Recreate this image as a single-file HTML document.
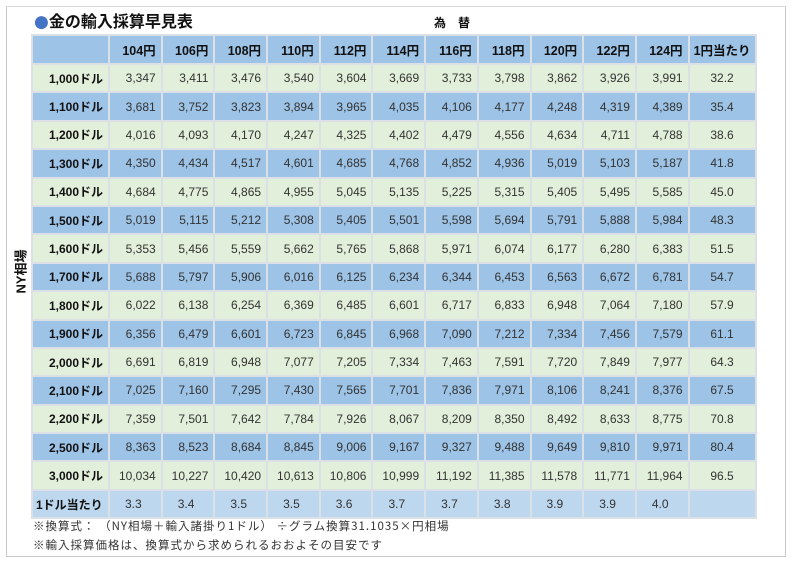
<!DOCTYPE html>
<html><head><meta charset="utf-8"><style>
*{margin:0;padding:0;box-sizing:border-box}
body{width:792px;height:564px;background:#fff;position:relative;overflow:hidden;font-family:"Liberation Sans","Noto Sans CJK JP",sans-serif}
.frame{position:absolute;left:6px;top:6px;width:780px;height:551px;border:1px solid #c8c8c8;border-top-color:#d8d8d8}
.title{position:absolute;left:34px;top:9px;font-size:16px;font-weight:bold;color:#111;line-height:22px;font-family:"Noto Sans CJK JP",sans-serif}
.title span{color:#4472c4;font-family:"DejaVu Sans",sans-serif;font-size:17px}
.fx{position:absolute;left:434px;top:14px;font-size:12px;font-weight:bold;color:#111;letter-spacing:12px}
.ny{position:absolute;left:-4px;top:262px;width:48px;font-size:13px;font-weight:bold;color:#111;transform:rotate(-90deg);text-align:center}
table{position:absolute;left:31px;top:34px;border-collapse:separate;border-spacing:2px;background:#dbe0e7}
td{height:26.4px;font-size:12px;color:#333;text-align:right;padding:0 5px 0 0;white-space:nowrap}
td.h{font-weight:bold;color:#111}
td.last{text-align:center;padding:0}
tr.hd td{background:#9dc3e6;font-weight:bold;color:#111;font-size:12.5px;height:27px}
tr.g td{background:#e2efda}
tr.b td{background:#9dc3e6}
tr.l td{background:#bdd7ee}
tr.l td.n{text-align:left;padding-left:15px}
.note{position:absolute;left:33px;font-size:11.5px;color:#333;font-family:"Noto Sans CJK JP",sans-serif;letter-spacing:1px;line-height:16px}
</style></head><body>
<div class="frame"></div>
<div class="title"><span>●</span>金の輸入採算早見表</div>
<div class="fx">為替</div>
<div class="ny">NY相場</div>
<table>
<colgroup><col style="width:75px"><col span="11" style="width:50.7px"><col style="width:65px"></colgroup>
<tr class="hd"><td></td><td>104円</td><td>106円</td><td>108円</td><td>110円</td><td>112円</td><td>114円</td><td>116円</td><td>118円</td><td>120円</td><td>122円</td><td>124円</td><td class="last">1円当たり</td></tr>
<tr class="g"><td class="h">1,000ドル</td><td>3,347</td><td>3,411</td><td>3,476</td><td>3,540</td><td>3,604</td><td>3,669</td><td>3,733</td><td>3,798</td><td>3,862</td><td>3,926</td><td>3,991</td><td class="last">32.2</td></tr>
<tr class="b"><td class="h">1,100ドル</td><td>3,681</td><td>3,752</td><td>3,823</td><td>3,894</td><td>3,965</td><td>4,035</td><td>4,106</td><td>4,177</td><td>4,248</td><td>4,319</td><td>4,389</td><td class="last">35.4</td></tr>
<tr class="g"><td class="h">1,200ドル</td><td>4,016</td><td>4,093</td><td>4,170</td><td>4,247</td><td>4,325</td><td>4,402</td><td>4,479</td><td>4,556</td><td>4,634</td><td>4,711</td><td>4,788</td><td class="last">38.6</td></tr>
<tr class="b"><td class="h">1,300ドル</td><td>4,350</td><td>4,434</td><td>4,517</td><td>4,601</td><td>4,685</td><td>4,768</td><td>4,852</td><td>4,936</td><td>5,019</td><td>5,103</td><td>5,187</td><td class="last">41.8</td></tr>
<tr class="g"><td class="h">1,400ドル</td><td>4,684</td><td>4,775</td><td>4,865</td><td>4,955</td><td>5,045</td><td>5,135</td><td>5,225</td><td>5,315</td><td>5,405</td><td>5,495</td><td>5,585</td><td class="last">45.0</td></tr>
<tr class="b"><td class="h">1,500ドル</td><td>5,019</td><td>5,115</td><td>5,212</td><td>5,308</td><td>5,405</td><td>5,501</td><td>5,598</td><td>5,694</td><td>5,791</td><td>5,888</td><td>5,984</td><td class="last">48.3</td></tr>
<tr class="g"><td class="h">1,600ドル</td><td>5,353</td><td>5,456</td><td>5,559</td><td>5,662</td><td>5,765</td><td>5,868</td><td>5,971</td><td>6,074</td><td>6,177</td><td>6,280</td><td>6,383</td><td class="last">51.5</td></tr>
<tr class="b"><td class="h">1,700ドル</td><td>5,688</td><td>5,797</td><td>5,906</td><td>6,016</td><td>6,125</td><td>6,234</td><td>6,344</td><td>6,453</td><td>6,563</td><td>6,672</td><td>6,781</td><td class="last">54.7</td></tr>
<tr class="g"><td class="h">1,800ドル</td><td>6,022</td><td>6,138</td><td>6,254</td><td>6,369</td><td>6,485</td><td>6,601</td><td>6,717</td><td>6,833</td><td>6,948</td><td>7,064</td><td>7,180</td><td class="last">57.9</td></tr>
<tr class="b"><td class="h">1,900ドル</td><td>6,356</td><td>6,479</td><td>6,601</td><td>6,723</td><td>6,845</td><td>6,968</td><td>7,090</td><td>7,212</td><td>7,334</td><td>7,456</td><td>7,579</td><td class="last">61.1</td></tr>
<tr class="g"><td class="h">2,000ドル</td><td>6,691</td><td>6,819</td><td>6,948</td><td>7,077</td><td>7,205</td><td>7,334</td><td>7,463</td><td>7,591</td><td>7,720</td><td>7,849</td><td>7,977</td><td class="last">64.3</td></tr>
<tr class="b"><td class="h">2,100ドル</td><td>7,025</td><td>7,160</td><td>7,295</td><td>7,430</td><td>7,565</td><td>7,701</td><td>7,836</td><td>7,971</td><td>8,106</td><td>8,241</td><td>8,376</td><td class="last">67.5</td></tr>
<tr class="g"><td class="h">2,200ドル</td><td>7,359</td><td>7,501</td><td>7,642</td><td>7,784</td><td>7,926</td><td>8,067</td><td>8,209</td><td>8,350</td><td>8,492</td><td>8,633</td><td>8,775</td><td class="last">70.8</td></tr>
<tr class="b"><td class="h">2,500ドル</td><td>8,363</td><td>8,523</td><td>8,684</td><td>8,845</td><td>9,006</td><td>9,167</td><td>9,327</td><td>9,488</td><td>9,649</td><td>9,810</td><td>9,971</td><td class="last">80.4</td></tr>
<tr class="g"><td class="h">3,000ドル</td><td>10,034</td><td>10,227</td><td>10,420</td><td>10,613</td><td>10,806</td><td>10,999</td><td>11,192</td><td>11,385</td><td>11,578</td><td>11,771</td><td>11,964</td><td class="last">96.5</td></tr>
<tr class="l"><td class="h" style="text-align:left;padding-left:3px">1ドル当たり</td><td class="n">3.3</td><td class="n">3.4</td><td class="n">3.5</td><td class="n">3.5</td><td class="n">3.6</td><td class="n">3.7</td><td class="n">3.7</td><td class="n">3.8</td><td class="n">3.9</td><td class="n">3.9</td><td class="n">4.0</td><td></td></tr>
</table>
<div class="note" style="top:518px">※換算式： （NY相場＋輸入諸掛り1ドル） ÷グラム換算31.1035×円相場</div>
<div class="note" style="top:537px">※輸入採算価格は、換算式から求められるおおよその目安です</div>
</body></html>
